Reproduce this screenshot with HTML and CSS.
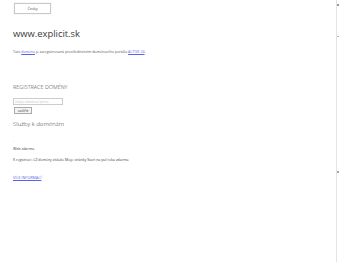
FILE: index.html
```html
<!DOCTYPE html>
<html lang="cs">
<head>
<meta charset="utf-8">
<title>www.explicit.sk</title>
<link rel="stylesheet" href="styles.css">
</head>
<body>
<div class="page">
  <header class="top">
    <button class="lang">Česky</button>
  </header>
  <main class="content">
    <h1 class="domain">www.explicit.sk</h1>
    <p class="note">Tato <a href="#">doména</a> je zaregistrovaná prostřednictvím doménového portálu <a href="#">ACTIVE 24</a>.</p>

    <section class="reg">
      <h2 class="reg-title">REGISTRACE DOMÉNY</h2>
      <form class="reg-form">
        <input class="reg-input" type="text" placeholder="Zadejte doménové jméno">
        <button class="reg-btn" type="button">ověřit</button>
      </form>
    </section>

    <section class="services">
      <h3 class="services-title">Služby k doménám</h3>
      <div class="dot">.</div>
      <p class="svc-name">Web zdarma</p>
      <p class="svc-desc">K registraci .CZ domény získáte Moje stránky Start na půl roku zdarma</p>
      <a class="more" href="#">VÍCE INFORMACÍ</a>
    </section>
  </main>
  <aside class="side">
    <span class="mark m1"></span>
    <span class="mark m2"></span>
    <span class="mark m3"></span>
  </aside>
</div>
</body>
</html>
```
FILE: styles.css
```css
html, body {
  margin: 0;
  padding: 0;
  background: #fff;
}
body {
  font-family: "Open Sans", "DejaVu Sans", sans-serif;
  color: #444;
  width: 350px;
  height: 262px;
  overflow: hidden;
}
.page {
  position: relative;
  width: 350px;
  height: 262px;
}
.top {
  padding: 3px 0 0 14px;
  display: flex;
}
.lang {
  width: 37px;
  height: 11px;
  padding: 0;
  margin: 0;
  border: 1px solid #c8c8c8;
  background: #fff;
  font-family: "Open Sans", sans-serif;
  font-size: 3.8px;
  color: #555;
  line-height: 9px;
  box-shadow: 0 0 1px #ddd;
}
.content {
  padding-left: 13px;
  display: flex;
  flex-direction: column;
  align-items: flex-start;
}
.domain {
  margin: 14px 0 0 0;
  font-weight: 400;
  font-size: 9.4px;
  line-height: 12px;
  color: #3a3a3a;
}
.note {
  margin: 9px 0 0 0;
  font-size: 3.55px;
  line-height: 5px;
  color: #555;
}
.note a {
  color: #5a62ee;
}
.reg {
  margin-top: 30px;
}
.reg-title {
  margin: 0;
  font-weight: 300;
  font-size: 5.4px;
  line-height: 7px;
  color: #333;
  letter-spacing: 0.05px;
}
.reg-form {
  margin-top: 7px;
  display: flex;
  flex-direction: column;
  align-items: flex-start;
  gap: 2px;
}
.reg-input {
  width: 46px;
  height: 5px;
  padding: 0 1px;
  margin: 0;
  border: 1px solid #ccc;
  font-family: "Open Sans", sans-serif;
  font-size: 2.8px;
  color: #999;
  outline: none;
}
.reg-input::placeholder {
  color: #bbb;
}
.reg-btn {
  width: 18px;
  height: 7px;
  padding: 0;
  margin: 0 0 0 1px;
  border: 1px solid #aaa;
  background: #f4f4f4;
  font-family: "Open Sans", sans-serif;
  font-size: 4px;
  line-height: 5px;
  color: #333;
}
.services {
  margin-top: 6px;
}
.services-title {
  margin: 0;
  font-weight: 300;
  font-size: 6px;
  line-height: 8px;
  color: #333;
}
.dot {
  margin-top: 10px;
  font-size: 4px;
  line-height: 5px;
  color: #888;
}
.svc-name {
  margin: 3px 0 0 0;
  font-size: 3.6px;
  line-height: 5px;
  color: #444;
}
.svc-desc {
  margin: 6px 0 0 0;
  font-size: 3.55px;
  line-height: 5px;
  color: #444;
}
.more {
  margin-top: 10px;
  font-size: 3.7px;
  line-height: 5px;
  color: #5a62ee;
  text-decoration: underline;
}
.side {
  position: absolute;
  top: 0;
  left: 336px;
  width: 6px;
  height: 262px;
  border-left: 1px solid #e4e4e4;
}
.mark {
  position: absolute;
  left: 0;
  width: 2px;
  height: 2px;
  background: #9a9a9a;
}
.m1 { top: 4px; }
.m2 { top: 36px; width: 2px; height: 1px; background: #bbb; }
.m3 { top: 171px; width: 2px; height: 2px; background: #aaa; }
```
